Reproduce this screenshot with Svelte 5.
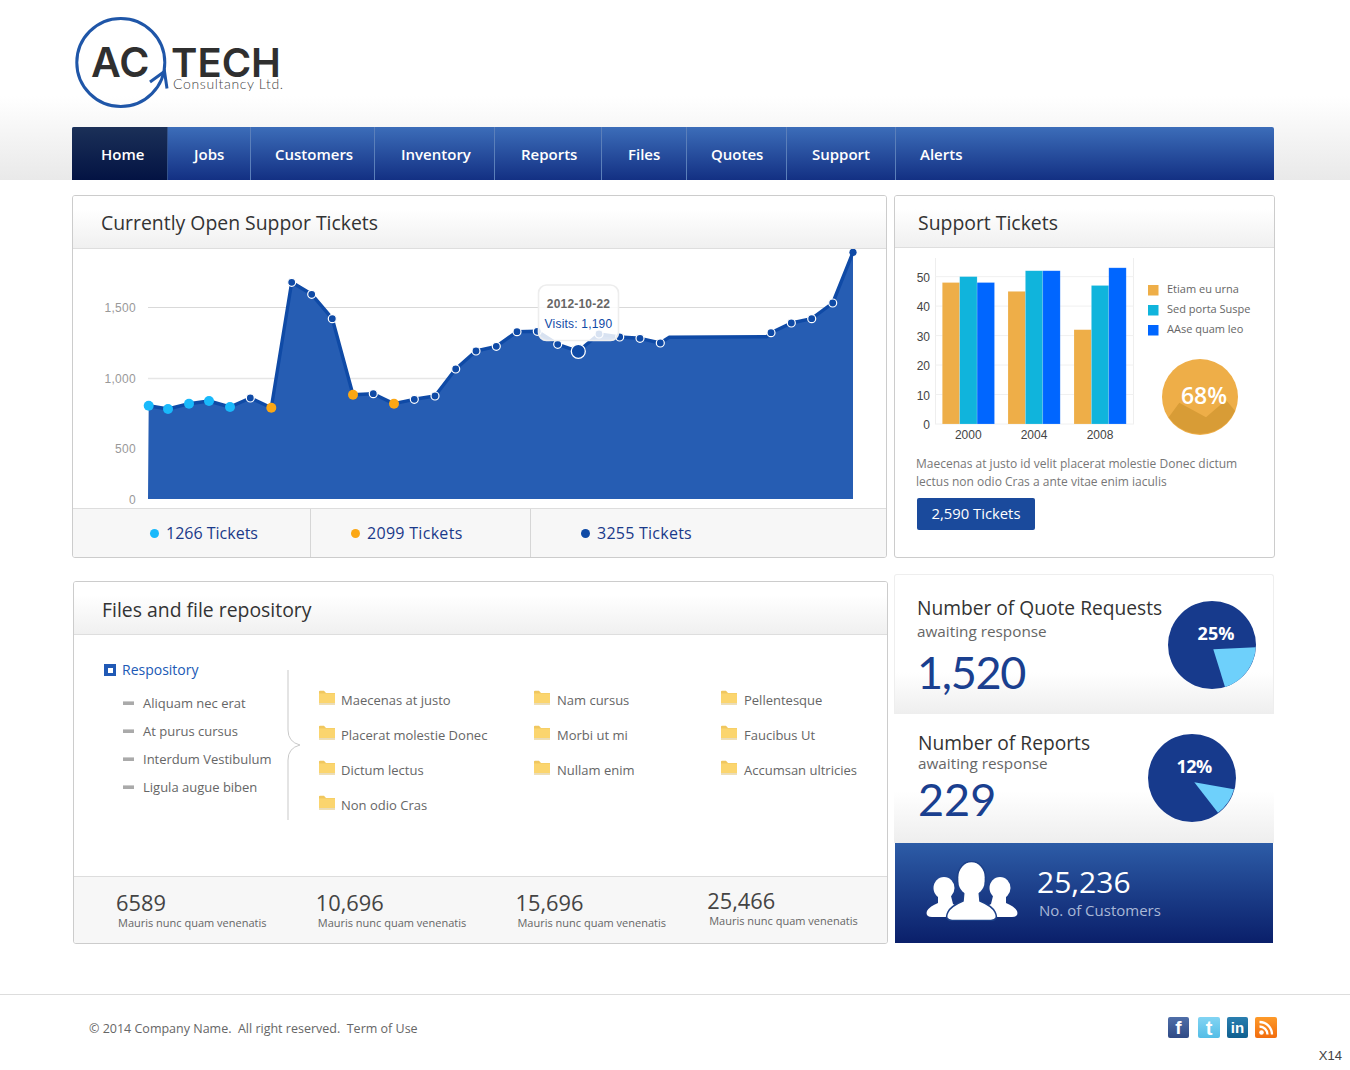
<script>
  const nav = [
    { label: 'Home', w: 96, pad: 29 }, { label: 'Jobs', w: 83, pad: 26 }, { label: 'Customers', w: 124, pad: 24 },
    { label: 'Inventory', w: 120, pad: 26 }, { label: 'Reports', w: 107, pad: 26 }, { label: 'Files', w: 85, pad: 26 },
    { label: 'Quotes', w: 100, pad: 24 }, { label: 'Support', w: 109, pad: 25 }, { label: 'Alerts', w: 378, pad: 24 }
  ];
  const pts = [
    [148.7,405.7,'c'],[168,409,'c'],[189,403.7,'c'],[209,401,'c'],[230,407,'c'],[250.3,398,'b'],[271.3,407.7,'o'],
    [291.7,282.3,'b'],[311.7,294.3,'b'],[332.3,318.7,'b'],[353,394.7,'o'],[373.3,393.7,'b'],[394,403.7,'o'],
    [414.3,399.3,'b'],[435,396,'b'],[455.7,369,'b'],[476,351,'b'],[496.3,346.3,'b'],[517,331.7,'b'],[537.3,331.3,'b'],
    [557.7,344.3,'b'],[578.3,351.3,'B'],[599,334,'b'],[619.7,337,'b'],[640,338.3,'b'],[660.3,343,'b'],
    [669,337.3,''],[766.7,336.7,''],[771,332.7,'b'],[791.3,323,'b'],[811.7,318.7,'b'],[832.7,303,'b'],[853,252.3,'e']
  ];
  const line = pts.map((p) => p[0] + ',' + p[1]).join(' ');
  const area = '148,499 ' + line + ' 853,499';
  const dotFill = { c: '#19b9fb', o: '#fba714', b: '#0f4aa6', B: '#0f4aa6', e: '#0f4aa6' };
  const yLabels = [[1500, 307, '1,500'], [1000, 378, '1,000'], [500, 448, '500'], [0, 499, '0']];

  const tickets = [
    { n: '1266 Tickets', color: '#19b9fb', w: 238, pad: 77, ls: 0 },
    { n: '2099 Tickets', color: '#fba714', w: 220, pad: 40, ls: 0.3 },
    { n: '3255 Tickets', color: '#0f4aa6', w: 355, pad: 50, ls: 0.25 }
  ];

  const bars = [
    { x: 942.3, year: '2000', v: [48, 50, 48] },
    { x: 1008, year: '2004', v: [45, 52, 52] },
    { x: 1074, year: '2008', v: [32, 47, 53] }
  ];
  const barColors = ['#eeae48', '#10b4dc', '#0066ff'];
  const ticks = [0, 10, 20, 30, 40, 50];
  const y0 = 424, unit = 2.947;
  const legend = [
    ['Etiam eu urna', '#eeae48'], ['Sed porta Suspe', '#10b4dc'], ['AAse quam leo', '#0066ff']
  ];

  const tree = ['Aliquam nec erat', 'At purus cursus', 'Interdum Vestibulum', 'Ligula augue biben'];
  const folders = [
    ['Maecenas at justo', 'Placerat molestie Donec', 'Dictum lectus', 'Non odio Cras'],
    ['Nam cursus', 'Morbi ut mi', 'Nullam enim'],
    ['Pellentesque', 'Faucibus Ut', 'Accumsan ultricies']
  ];
  const stats = [
    { n: '6589', w: 200 }, { n: '10,696', w: 200 }, { n: '15,696', w: 192 }, { n: '25,466', w: 180, up: true }
  ];
</script>

<div class="page">
  <header class="top">
    <svg class="logo" viewBox="70 10 225 105" width="225" height="105" role="img" aria-label="AC TECH Consultancy Ltd.">
      <circle cx="120.8" cy="62.5" r="44" fill="none" stroke="#1f56a8" stroke-width="3"/>
      <path d="M150 82 L164.5 71.5 L167 88.5" fill="none" stroke="#1f56a8" stroke-width="3"/>
      <text x="91" y="77" class="lg-ac">AC</text>
      <text x="171" y="77" class="lg-tech">TECH</text>
      <text x="173" y="89" class="lg-sub">Consultancy Ltd.</text>
    </svg>
    <nav class="nav">
      {#each nav as item, i}
        <a class="nav-item" class:active={i === 0} style="width:{item.w}px;padding-left:{item.pad}px">{item.label}</a>
      {/each}
    </nav>
  </header>

  <main class="main">
    <div class="row">
      <section class="panel chart-panel">
        <div class="panel-head"><h2>Currently Open Suppor Tickets</h2></div>
        <svg class="area-chart" viewBox="73 249 813 259" width="813" height="259" aria-label="Open tickets chart">
          <line x1="148" x2="853" y1="307.5" y2="307.5" stroke="#d9d9d9"/>
          <line x1="148" x2="853" y1="378.5" y2="378.5" stroke="#e6e6e6" stroke-width="1.4"/>
          {#each yLabels as l}
            <text x="136" y={l[1] + 4.5} text-anchor="end" class="ylab">{l[2]}</text>
          {/each}
          <polygon points={area} fill="#265db3"/>
          <polyline points={line} fill="none" stroke="#0f4aa6" stroke-width="3.4" stroke-linejoin="round"/>
          {#each pts as p}
            {#if p[2] === 'b'}
              <circle cx={p[0]} cy={p[1]} r="4" fill={dotFill.b} stroke="#fff" stroke-width="1.2"/>
            {:else if p[2] === 'B'}
              <circle cx={p[0]} cy={p[1]} r="7" fill={dotFill.B} stroke="#fff" stroke-width="1.3"/>
            {:else if p[2] === 'e'}
              <circle cx={p[0]} cy={p[1]} r="3.6" fill={dotFill.e}/>
            {:else if p[2]}
              <circle cx={p[0]} cy={p[1]} r="5" fill={dotFill[p[2]]}/>
            {/if}
          {/each}
          <rect x="538.5" y="285" width="80" height="55.5" rx="8" fill="#fff" fill-opacity="0.84" stroke="#ededed" stroke-width="1.6"/>
          <text x="578.5" y="308" text-anchor="middle" class="tip-date">2012-10-22</text>
          <text x="578.5" y="328" text-anchor="middle" class="tip-val">Visits: 1,190</text>
        </svg>
        <div class="ticket-row">
          {#each tickets as t}
            <div class="ticket" style="width:{t.w}px;padding-left:{t.pad}px;letter-spacing:{t.ls}px">
              <span class="dot" style="background:{t.color}"></span>{t.n}
            </div>
          {/each}
        </div>
      </section>

      <section class="panel tickets-panel">
        <div class="panel-head short"><h2>Support Tickets</h2></div>
        <svg class="bar-chart" viewBox="895 248 379 196" width="379" height="196" aria-label="Support tickets bar chart">
          <line x1="935.5" x2="935.5" y1="258" y2="424" stroke="#eee"/>
          <line x1="1133.5" x2="1133.5" y1="258" y2="424" stroke="#eee"/>
          {#each ticks as t}
            <line x1="935" x2="1134" y1={y0 - t * unit} y2={y0 - t * unit} stroke="#f0f0f0"/>
            <text x="930" y={y0 - t * unit + 5} text-anchor="end" class="blab">{t}</text>
          {/each}
          {#each bars as g}
            {#each g.v as v, i}
              <rect x={g.x + i * 17.4} y={y0 - v * unit} width="17.4" height={v * unit} fill={barColors[i]} stroke="#fff" stroke-opacity="0.25" stroke-width="0.6"/>
            {/each}
            <text x={g.x + 26} y="439" text-anchor="middle" class="blab">{g.year}</text>
          {/each}
          {#each legend as l, i}
            <rect x="1148" y={285 + i * 20} width="10.5" height="10.5" fill={l[1]}/>
            <text x="1167" y={293 + i * 20} class="legend">{l[0]}</text>
          {/each}
          <circle cx="1200" cy="397" r="38" fill="#eeae48"/>
          <path d="M1168.7 417.3 L1179.3 402.7 L1206 417.3 L1226 400 L1235 410.7 A38 38 0 0 1 1168.7 417.3 Z" fill="#d89c36"/>
          <text x="1204" y="404" text-anchor="middle" class="pct68">68%</text>
        </svg>
        <p class="desc">Maecenas at justo id velit placerat molestie Donec dictum lectus non odio Cras a ante vitae enim iaculis</p>
        <button class="btn">2,590 Tickets</button>
      </section>
    </div>

    <div class="row second">
      <section class="panel files-panel">
        <div class="panel-head files-head"><h2>Files and file repository</h2></div>
        <div class="files-body">
          <div class="tree">
            <div class="tree-root"><span class="root-icon"></span>Respository</div>
            <ul>
              {#each tree as t}
                <li><span class="minus"></span>{t}</li>
              {/each}
            </ul>
          </div>
          <svg class="brace" width="14" height="150" viewBox="0 0 14 150" aria-hidden="true">
            <path d="M1 0 V60 Q1 72 13 75 Q1 78 1 90 V150" fill="none" stroke="#c9c9c9" stroke-width="1"/>
          </svg>
          <div class="folders">
            {#each folders as col, c}
              <ul class="fcol fcol{c}">
                {#each col as f}
                  <li>
                    <svg class="folder" width="17" height="15" viewBox="0 0 17 15" aria-hidden="true">
                      <path d="M0 14.5 V1.5 Q0 .7 1 .7 H5 L7 3 H16 V14.5 Z" fill="#f0c75f"/>
                      <rect x="0" y="3.4" width="16" height="10" class="folder-front"/>
                      <rect x="0" y="13" width="16" height="1.6" fill="#e9dcba"/>
                    </svg>{f}
                  </li>
                {/each}
              </ul>
            {/each}
          </div>
        </div>
        <div class="stats">
          {#each stats as s}
            <div class="stat" class:up={s.up} style="width:{s.w}px">
              <div class="stat-n">{s.n}</div>
              <div class="stat-c">Mauris nunc quam venenatis</div>
            </div>
          {/each}
        </div>
      </section>

      <aside class="side">
        <div class="card quote">
          <div class="card-text">
            <h3>Number of Quote Requests</h3>
            <p>awaiting response</p>
            <div class="big b1">1,520</div>
          </div>
          <svg class="pie" viewBox="0 0 88 88" width="88" height="88" aria-label="25%">
            <circle cx="44" cy="44" r="44" fill="#173a8c"/>
            <path d="M45.3 48.3 L87.7 46.3 A44 44 0 0 1 57 86 Z" fill="#6ed0fb"/>
            <text x="48" y="39" text-anchor="middle" class="pie-t">25%</text>
          </svg>
        </div>
        <div class="card reports">
          <div class="card-text">
            <h3>Number of Reports</h3>
            <p>awaiting response</p>
            <div class="big b2">229</div>
          </div>
          <svg class="pie" viewBox="0 0 88 88" width="88" height="88" aria-label="12%">
            <circle cx="44" cy="44" r="44" fill="#173a8c"/>
            <path d="M46.3 48.3 L86 55.3 A44 44 0 0 1 70 78.7 Z" fill="#6ed0fb"/>
            <text x="46" y="39" text-anchor="middle" class="pie-t tight">12%</text>
          </svg>
        </div>
        <div class="card customers">
          <svg class="people" viewBox="926 861 92 60" width="92" height="60" aria-hidden="true">
            <ellipse cx="944" cy="888" rx="10.5" ry="11" fill="#fff"/>
            <path d="M932 917 Q925 917 927 911 Q930 906 938 903 L938 896 H951 L953 904 L960 908 L950 917 Z" fill="#fff"/>
            <ellipse cx="1000" cy="888" rx="10.5" ry="11" fill="#fff"/>
            <path d="M1012 917 Q1019 917 1017 911 Q1014 906 1006 903 L1006 896 H993 L991 904 L984 908 L994 917 Z" fill="#fff"/>
            <g stroke="#1c4089" stroke-width="1.6">
              <ellipse cx="971.5" cy="877.5" rx="14" ry="16" fill="#fff"/>
              <path d="M952 920.5 Q944 920 948 912 Q951 906 963 901 L964 890 H979 L980 901 Q992 906 995 912 Q999 920 991 920.5 Z" fill="#fff"/>
            </g>
            <ellipse cx="971.5" cy="882" rx="13" ry="13" fill="#fff"/>
          </svg>
          <div>
            <div class="cust-n">25,236</div>
            <div class="cust-c">No. of Customers</div>
          </div>
        </div>
      </aside>
    </div>
  </main>

  <footer class="foot">
    <div class="copy">© 2014 Company Name.&nbsp; All right reserved.&nbsp; Term of Use</div>
    <div class="social">
      <span class="si fb">f</span>
      <span class="si tw">t</span>
      <span class="si li">in</span>
      <span class="si rss">
        <svg width="22" height="22" viewBox="0 0 22 22" aria-hidden="true">
          <circle cx="6.5" cy="15.5" r="2.3" fill="#fff"/>
          <path d="M4.5 9.5 A8 8 0 0 1 12.5 17.5 M4.5 5 A12.5 12.5 0 0 1 17 17.5" fill="none" stroke="#fff" stroke-width="2.3"/>
        </svg>
      </span>
    </div>
    <div class="x14">X14</div>
  </footer>
</div>

<style>
  :global(body) { margin: 0; background: #fff; }
  .page { width: 1350px; height: 1070px; overflow: hidden; font-family: "Open Sans", sans-serif; color: #333; }
  .top { height: 180px; padding: 0 76px 0 72px; box-sizing: border-box; display: flex; flex-direction: column; justify-content: flex-end;
    background: linear-gradient(#fff 0, #fff 96px, #e9e9e9 180px); }
  .logo { display: block; margin: 0 0 12px -2px; }
  .lg-ac { font: 600 41px "Inter", sans-serif; fill: #2f2f2f; }
  .lg-tech { font: 600 40px "Inter", sans-serif; fill: #2f2f2f; }
  .lg-sub { font: 300 14px "Lato", sans-serif; fill: #444; letter-spacing: .66px; }
  .nav { display: flex; height: 53px; width: 1202px; background: linear-gradient(#3c6db9, #133083); border-radius: 2px 2px 0 0; overflow: hidden; }
  .nav-item { box-sizing: border-box; line-height: 55px; color: #fff; font-size: 15px; font-weight: 600; border-right: 1px solid #5b7fba; }
  .nav-item:last-child { border-right: 0; }
  .nav-item.active { background: linear-gradient(#1b3058, #031343); border-right: 1px solid #33528a; }

  .main { padding-left: 72px; }
  .row { display: flex; align-items: flex-start; margin-top: 15px; gap: 7px; }
  .row.second { margin-top: 16px; gap: 6px; }
  .panel { box-sizing: border-box; border: 1px solid #ccc; border-radius: 3px; background: #fff; overflow: hidden; }
  .panel-head { box-sizing: border-box; height: 53px; padding: 0 28px; background: linear-gradient(#fff 25%, #f0f0f0); border-bottom: 1px solid #dedede; }
  .panel-head.short { height: 52px; padding: 0 23px; }
  h2 { margin: 0; font-size: 19.4px; line-height: 54px; font-weight: 400; color: #333; }
  .files-head h2 { line-height: 55px; }
  .chart-panel { width: 815px; height: 363px; }
  .area-chart, .bar-chart { display: block; }
  .ylab { font: 12px "Liberation Sans", sans-serif; fill: #999; letter-spacing: .3px; }
  .tip-date { font: 700 12px "Liberation Sans", sans-serif; fill: #666; letter-spacing: .2px; }
  .tip-val { font: 12px "Liberation Sans", sans-serif; fill: #0f4aa6; letter-spacing: .2px; }
  .ticket-row { display: flex; height: 48px; background: #f7f7f7; border-top: 1px solid #ddd; }
  .ticket { box-sizing: border-box; font-size: 16px; color: #1a3a8a; border-right: 1px solid #d6d6d6; display: flex; align-items: center; }
  .ticket:last-child { border-right: 0; }
  .dot { width: 9px; height: 9px; border-radius: 50%; margin-right: 7px; flex: none; }

  .tickets-panel { width: 381px; height: 363px; }
  .blab { font: 12px "Liberation Sans", sans-serif; fill: #444; }
  .legend { font: 11px "Open Sans", sans-serif; fill: #666; }
  .pct68 { font: 600 23px "Open Sans", sans-serif; fill: #fff; }
  .desc { margin: 11px 20px 0 21px; width: 340px; font-size: 12px; line-height: 18px; color: #777; }
  .btn { display: block; margin: 7px 0 0 22px; width: 118px; height: 32px; padding: 0 0 2px; border: 0; border-radius: 2px; background: #1a4a9c; color: #fff; font: 14.8px "Open Sans", sans-serif; }

  .files-panel { width: 815px; height: 363px; margin: 7px 0 0 1px; }
  .files-body { display: flex; height: 241px; box-sizing: border-box; padding: 0 0 0 30px; }
  .tree { width: 183px; flex: none; padding-top: 25px; font-size: 14px; }
  .tree-root { display: flex; align-items: center; font-size: 14px; line-height: 20px; color: #2059b5; }
  .root-icon { width: 12px; height: 12px; margin-right: 6px; background: linear-gradient(#fff, #fff) center / 5px 5px no-repeat, #2059b5; flex: none; }
  ul { list-style: none; margin: 0; padding: 0; }
  .tree ul { margin-top: 9px; padding-left: 19px; }
  .tree li { display: flex; align-items: center; height: 28px; font-size: 13px; white-space: nowrap; color: #666; }
  .minus { width: 11px; height: 4px; margin-right: 9px; background: #aaa; border-top: 1px solid #ccc; box-sizing: border-box; flex: none; }
  .brace { margin-top: 35px; flex: none; }
  .folders { display: flex; padding: 47px 0 0 18px; }
  .fcol { width: 215px; }
  .fcol1 { width: 187px; }
  .fcol li { display: flex; align-items: center; height: 35px; font-size: 13px; color: #666; }
  .folder { margin-right: 5px; flex: none; position: relative; top: -2px; }
  .fcol1 .folder, .fcol2 .folder { margin-right: 6px; }
  .folder-front { fill: #fbd56e; }
  .stats { display: flex; height: 67px; box-sizing: border-box; padding: 0 0 0 42px; background: #f7f7f7; border-top: 1px solid #ddd; }
  .stat { padding-top: 12px; }
  .stat.up { padding-top: 10px; }
  .stat-n { font-size: 21.8px; line-height: 27px; color: #444; }
  .stat-c { font-size: 11px; line-height: 13px; color: #666; padding-left: 2px; }

  .side { width: 380px; }
  .card { box-sizing: border-box; display: flex; position: relative; }
  .quote { height: 140px; padding: 19px 17px 0 22px; justify-content: space-between; border: 1px solid #eee; border-bottom: 0; border-radius: 3px 3px 0 0; background: linear-gradient(#fff 70%, #eee); }
  .reports { height: 129px; padding: 15px 38px 0 24px; justify-content: space-between; background: linear-gradient(#fff 60%, #eee); }
  .card-text { flex: none; white-space: nowrap; }
  h3 { margin: 0; font-size: 19.2px; line-height: 27px; font-weight: 400; color: #333; }
  .card p { margin: 0; font-size: 15.3px; line-height: 21px; color: #666; }
  .reports p { line-height: 15px; }
  .big { font: 400 45px/60px "Lato", sans-serif; color: #1a3f8f; }
  .b1 { margin-top: 0; letter-spacing: -1.3px; }
  .b2 { margin-top: 2px; line-height: 52px; }
  .pie { flex: none; margin-top: 7px; }
  .reports .pie { margin-top: 5px; }
  .pie-t { font: 700 18px "Open Sans", sans-serif; fill: #fff; }
  .tight { letter-spacing: -.6px; }
  .customers { width: 378px; height: 100px; margin-left: 1px; padding: 18px 0 0 31px; gap: 19px; background: linear-gradient(#2d5ca7, #0a1f6a); }
  .people { flex: none; }
  .cust-n { font-size: 30px; line-height: 40px; color: #fff; margin-top: 1px; }
  .cust-c { font-size: 15px; line-height: 16px; color: #a9b8d6; margin: 0 0 0 2px; }

  .foot { position: relative; margin-top: 50px; height: 76px; border-top: 1px solid #ddd; display: flex; justify-content: space-between; padding: 24px 73px 0 89px; box-sizing: border-box; }
  .copy { font-size: 12.5px; line-height: 20px; color: #666; }
  .social { display: flex; margin-top: -2px; }
  .si { display: block; width: 21px; height: 21px; border-radius: 2px; text-align: center; color: #fff; font: 700 16px/22px "Liberation Sans", sans-serif; }
  .fb { background: linear-gradient(#4f6ea8, #2f4a85); font-size: 19px; }
  .tw { background: linear-gradient(#82d4f3, #54bde6); font-size: 20px; margin-left: 9px; width: 22px; }
  .li { background: linear-gradient(#2a7fb0, #0f5f8f); margin-left: 7px; font-size: 15px; }
  .rss { background: linear-gradient(#fd9a2a, #f26d0e); width: 22px; margin-left: 7px; }
  .x14 { position: absolute; right: 8px; top: 53px; font: 13px "Liberation Sans", sans-serif; color: #444; }
</style>
